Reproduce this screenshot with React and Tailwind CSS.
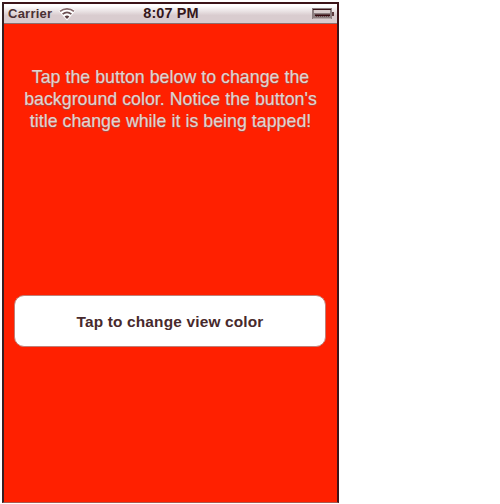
function WifiIcon() {
  return (
    <svg width="18" height="14" viewBox="0 0 18 14" fill="none">
      <path d="M0.5 3.8C5.5 -0.6 12.5 -0.6 17.5 3.8L9 13.5Z" fill="#fff" />
      <path d="M2 4.4C6 1 12 1 16 4.4" stroke="#86696b" strokeWidth="1.7" />
      <path d="M4.6 7.2C7.2 5 10.8 5 13.4 7.2" stroke="#6b4f52" strokeWidth="1.7" />
      <path d="M6.6 9.4C8 8.2 10 8.2 11.4 9.4L9 12Z" fill="#5c4043" />
    </svg>
  );
}

function BatteryIcon() {
  return (
    <svg width="22" height="11" viewBox="0 0 22 11">
      <rect x="0" y="0" width="20" height="11" fill="#8c7e80" />
      <rect x="20" y="4" width="2" height="4" fill="#5c3a3e" />
      <rect x="1" y="1" width="18" height="1" fill="#3c1419" />
      <rect x="2" y="2" width="16" height="3" fill="#d8cccd" />
      <rect x="2" y="5" width="16" height="1" fill="#8c7e80" />
      <path d="M3 7.5H18" stroke="#35090e" strokeWidth="2" />
      <path d="M3 8.5H18" stroke="#8c7e80" strokeWidth="1" strokeDasharray="1 1" />
      <rect x="1" y="10" width="18" height="1" fill="#b5a9aa" />
    </svg>
  );
}

export default function App() {
  return (
    <div className="h-[504px] w-[500px] overflow-hidden bg-white pl-[2px] pt-[2px] font-['Liberation_Sans',Arial,sans-serif]">
      <div className="flex h-[501px] w-[337px] flex-col border-t-2 border-r-2 border-b border-l-2 border-t-[#3c1419] border-r-[#3c1419] border-b-[#a85a50] border-l-[#352022] bg-[#ff2000]">
        <header className="grid h-5 shrink-0 grid-cols-3 items-center border-b border-[#8c6e6e] bg-linear-to-b from-white from-10% to-[#d9cccf] to-60% pl-1 pr-[3px] text-[#35171b]">
          <div className="flex items-center gap-[6px]">
            <span className="text-[13px] font-bold leading-none tracking-[0.25px] text-[#4a3033]">Carrier</span>
            <WifiIcon />
          </div>
          <span className="pb-px text-center text-[14.5px] font-bold leading-none tracking-[0.1px]">8:07 PM</span>
          <div className="flex justify-end pb-px">
            <BatteryIcon />
          </div>
        </header>
        <p className="mt-[42px] text-center text-[17.7px] leading-[22px] tracking-[0.06px] text-[#e3d3cf] [-webkit-text-stroke:0.2px_#e3d3cf] [text-shadow:0_1px_1px_#9d514b]">
          <span className="block whitespace-nowrap">Tap the button below to change the</span>
          <span className="block whitespace-nowrap">background color. Notice the button's</span>
          <span className="block whitespace-nowrap">title change while it is being tapped!</span>
        </p>
        <button className="ml-[10px] mr-[11px] mt-[163px] h-[52px] rounded-[10px] border border-[#c08078] bg-white pt-px text-[15.4px] font-bold tracking-[0.18px] text-[#47292c]">
          Tap to change view color
        </button>
      </div>
    </div>
  );
}
